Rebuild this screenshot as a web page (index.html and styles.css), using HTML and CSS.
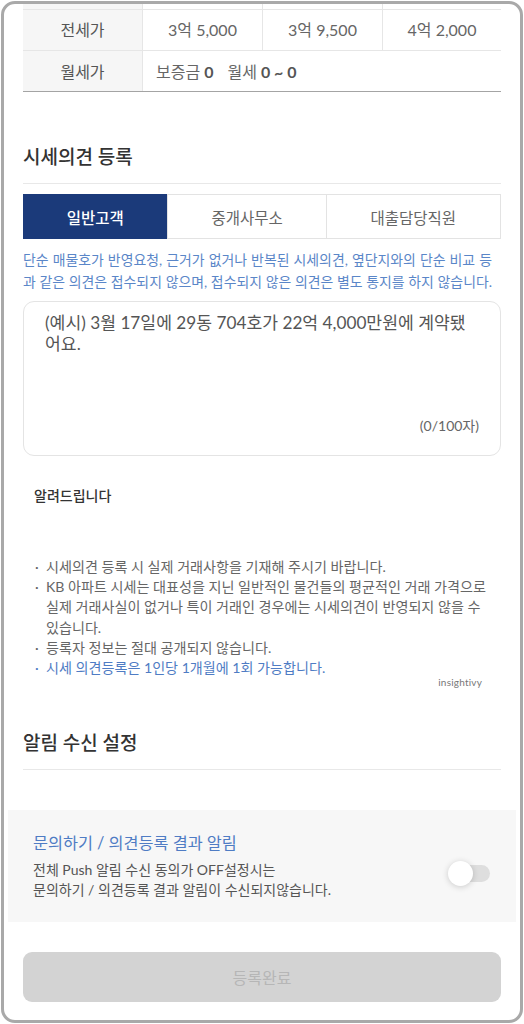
FILE: index.html
```html
<!DOCTYPE html>
<html lang="ko">
<head>
<meta charset="utf-8">
<title>시세의견 등록</title>
<link rel="stylesheet" href="styles.css">
</head>
<body>
<div class="frame">
  <div class="content">
    <div class="price-table">
      <div class="row row-partial">
        <div class="cell head"></div><div class="cell"></div><div class="cell"></div><div class="cell"></div>
      </div>
      <div class="row">
        <div class="cell head">전세가</div>
        <div class="cell">3억 5,000</div>
        <div class="cell">3억 9,500</div>
        <div class="cell">4억 2,000</div>
      </div>
      <div class="row row-last">
        <div class="cell head">월세가</div>
        <div class="cell wide">보증금 <b>0</b><span class="gap"></span>월세 <b>0 ~ 0</b></div>
      </div>
    </div>

    <h2 class="section-title first">시세의견 등록</h2>

    <div class="tabs">
      <div class="tab active">일반고객</div>
      <div class="tab">중개사무소</div>
      <div class="tab">대출담당직원</div>
    </div>

    <p class="notice">단순 매물호가 반영요청, 근거가 없거나 반복된 시세의견, 옆단지와의 단순 비교 등<br>과 같은 의견은 접수되지 않으며, 접수되지 않은 의견은 별도 통지를 하지 않습니다.</p>

    <div class="opinion-box">
      <div class="placeholder">(예시) 3월 17일에 29동 704호가 22억 4,000만원에 계약됐<br>어요.</div>
      <div class="counter">(0/100자)</div>
    </div>

    <div class="info-title">알려드립니다</div>
    <ul class="info-list">
      <li><span class="dot">·</span><span>시세의견 등록 시 실제 거래사항을 기재해 주시기 바랍니다.</span></li>
      <li><span class="dot">·</span><span>KB 아파트 시세는 대표성을 지닌 일반적인 물건들의 평균적인 거래 가격으로<br>실제 거래사실이 없거나 특이 거래인 경우에는 시세의견이 반영되지 않을 수<br>있습니다.</span></li>
      <li><span class="dot">·</span><span>등록자 정보는 절대 공개되지 않습니다.</span></li>
      <li class="blue"><span class="dot">·</span><span>시세 의견등록은 1인당 1개월에 1회 가능합니다.</span></li>
    </ul>
    <div class="watermark">insightivy</div>

    <h2 class="section-title second">알림 수신 설정</h2>

    <div class="push-box">
      <div class="push-text">
        <div class="push-title">문의하기 / 의견등록 결과 알림</div>
        <div class="push-desc">전체 Push 알림 수신 동의가 OFF설정시는<br>문의하기 / 의견등록 결과 알림이 수신되지않습니다.</div>
      </div>
      <div class="toggle"><span class="track"></span><span class="knob"></span></div>
    </div>

    <button class="submit" type="button">등록완료</button>
  </div>
</div>
</body>
</html>
```

FILE: styles.css
```css
* { box-sizing: border-box; }
html, body { margin: 0; padding: 0; background: #ffffff; }
body {
  font-family: Lato, "Noto Sans CJK KR", "Noto Sans", sans-serif;
  color: #333;
  width: 524px;
  height: 1024px;
  overflow: hidden;
}
.frame {
  margin: 1px 1px 0 1px;
  height: 1022px;
  border: 3px solid #a9a9a9;
  border-radius: 14px;
  overflow: hidden;
  background: #fff;
}
.content {
  padding: 0 19px;
  display: flex;
  flex-direction: column;
}

/* table */
.price-table { display: flex; flex-direction: column; }
.row {
  display: grid;
  grid-template-columns: 119px 120px 120px 119px;
  height: 41px;
  border-bottom: 1px solid #e6e6e6;
}
.row-partial { height: 6px; }
.row:nth-child(2) .cell { padding-bottom: 2px; }
.row-last { border-bottom: 1px solid #a4a4a4; height: 41px; }
.cell {
  display: flex;
  align-items: center;
  justify-content: center;
  font-size: 16px;
  color: #666;
  border-left: 1px solid #e6e6e6;
}
.cell.head { background: #f6f6f6; border-left: none; color: #555; }
.cell.wide { grid-column: 2 / 5; justify-content: flex-start; padding-left: 13px; color: #666; }
.cell.wide b { font-weight: 700; color: #555; margin-left: 4px; }
.gap { display: inline-block; width: 14px; }

/* section titles */
.section-title {
  margin: 0;
  font-size: 19px;
  font-weight: 500;
  line-height: 26px;
  color: #333;
  padding-bottom: 13px;
  border-bottom: 1px solid #e8e8e8;
}
.section-title.first { margin-top: 52px; }
.section-title.second { margin-top: 42px; }

/* tabs */
.tabs {
  margin-top: 10px;
  display: grid;
  grid-template-columns: 144fr 159fr 175fr;
  height: 45px;
  border: 1px solid #e3e3e3;
}
.tab {
  display: flex;
  align-items: center;
  justify-content: center;
  font-size: 15.5px;
  color: #666;
  border-left: 1px solid #e3e3e3;
}
.tab:first-child { border-left: none; }
.tab.active { background: #1b3a7a; color: #fff; font-weight: 500; margin: -1px 0 -1px -1px; }

/* notice */
.notice {
  margin: 10px 0 0;
  padding-right: 9px;
  font-size: 13.9px;
  line-height: 22px;
  color: #5a86c8;
  text-align: justify;
  text-align-last: justify;
}

/* textarea */
.opinion-box {
  margin-top: 8px;
  height: 155px;
  border: 1px solid #e4e4e4;
  border-radius: 11px;
  padding: 10px 21px 19px 21px;
  display: flex;
  flex-direction: column;
  justify-content: space-between;
}
.placeholder {
  font-size: 17.2px;
  line-height: 21px;
  color: #555;
  white-space: nowrap;
}
.counter {
  align-self: flex-end;
  font-size: 14px;
  line-height: 20px;
  color: #666;
}

/* info */
.info-title {
  margin-top: 30px;
  padding-left: 11px;
  font-size: 14px;
  line-height: 20px;
  font-weight: 500;
  color: #333;
}
.info-list {
  list-style: none;
  margin: 51px 0 0;
  padding: 0 0 0 12px;
  font-size: 14.1px;
  line-height: 20.2px;
  color: #666;
}
.info-list li { display: flex; white-space: nowrap; }
.info-list .dot { width: 11px; flex: none; }
.info-list li.blue { color: #4f7cc4; }
.watermark {
  align-self: flex-end;
  margin: -2px 19px 0 0;
  font-size: 10px;
  line-height: 12px;
  color: #777;
  letter-spacing: 0.2px;
}

/* push */
.push-box {
  margin: 40px -15px 0 -15px;
  background: #f7f7f7;
  height: 112px;
  padding: 22px 26px 22px 25px;
  display: flex;
  align-items: center;
  justify-content: space-between;
}
.push-text { display: flex; flex-direction: column; gap: 6px; }
.push-title {
  font-size: 16.3px;
  line-height: 22px;
  color: #4f7cc4;
}
.push-desc {
  font-size: 14px;
  line-height: 20px;
  color: #555;
  white-space: nowrap;
}
.toggle {
  display: flex;
  align-items: center;
  width: 48px;
  height: 26px;
  margin-top: 14px;
  margin-right: -2px;
}
.toggle .track {
  width: 34px;
  height: 17px;
  border-radius: 9px;
  background: #dedede;
  margin-left: 12px;
}
.toggle .knob {
  width: 25px;
  height: 25px;
  border-radius: 50%;
  background: #fff;
  box-shadow: 0 1px 6px rgba(0,0,0,0.18);
  margin-left: -42px;
}

/* button */
.submit {
  margin-top: 30px;
  height: 50px;
  border: none;
  border-radius: 9px;
  background: #d3d3d3;
  color: #b6b6b6;
  font-family: Lato, "Noto Sans CJK KR", sans-serif;
  font-size: 16px;
  font-weight: 400;
}
```
